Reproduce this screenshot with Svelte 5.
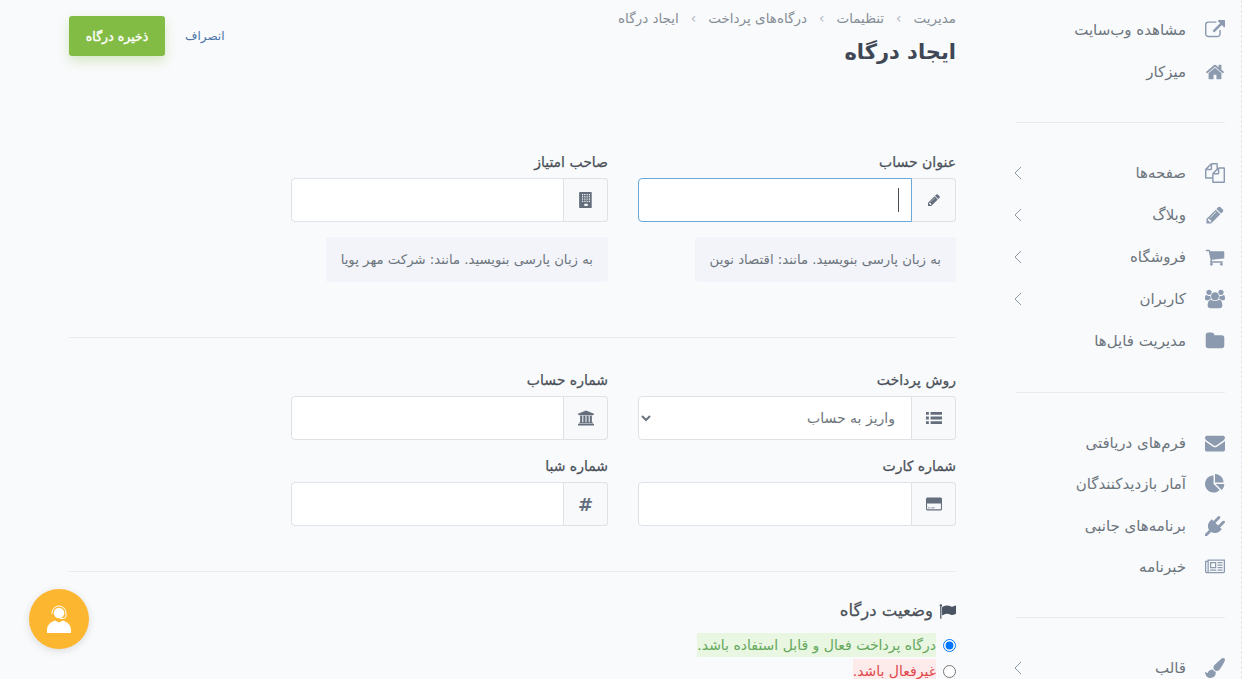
<script>
	const icons = {
		external: { vb: '0 0 1792 1792', d: 'M1408 928v320q0 119-84.5 203.5t-203.5 84.5h-832q-119 0-203.5-84.5t-84.5-203.5v-832q0-119 84.5-203.5t203.5-84.5h704q14 0 23 9t9 23v64q0 14-9 23t-23 9h-704q-66 0-113 47t-47 113v832q0 66 47 113t113 47h832q66 0 113-47t47-113v-320q0-14 9-23t23-9h64q14 0 23 9t9 23zm384-864v512q0 26-19 45t-45 19-45-19l-176-176-652 652q-10 10-23 10t-23-10l-114-114q-10-10-10-23t10-23l652-652-176-176q-19-19-19-45t19-45 45-19h512q26 0 45 19t19 45z' },
		home: { vb: '0 0 1792 1792', d: 'M1472 992v480q0 26-19 45t-45 19h-384v-384h-256v384h-384q-26 0-45-19t-19-45v-480q0-1 .5-3t.5-3l575-474 575 474q1 2 1 6zm223-69l-62 74q-8 9-21 11h-3q-13 0-21-7l-692-577-692 577q-12 8-24 7-13-2-21-11l-62-74q-8-10-7-23.5t11-21.5l719-599q32-26 76-26t76 26l244 204v-195q0-14 9-23t23-9h192q14 0 23 9t9 23v408l219 182q10 8 11 21.5t-7 23.5z' },
		files: { vb: '0 0 1792 1792', d: 'M1696 384q40 0 68 28t28 68v1216q0 40-28 68t-68 28h-960q-40 0-68-28t-28-68v-288h-544q-40 0-68-28t-28-68v-672q0-40 20-88t48-76l408-408q28-28 76-48t88-20h416q40 0 68 28t28 68v328q68-40 128-40h416zm-544 213l-299 299h299v-299zm-640-384l-299 299h299v-299zm196 647l316-316v-416h-384v416q0 40-28 68t-68 28h-416v640h512v-256q0-40 20-88t48-76zm956 804v-1152h-384v416q0 40-28 68t-68 28h-416v640h896z' },
		pencil: { vb: '0 0 1792 1792', d: 'M491 1536l91-91-235-235-91 91v107h128v128h107zm523-928q0-22-22-22-10 0-17 7l-542 542q-7 7-7 17 0 22 22 22 10 0 17-7l542-542q7-7 7-17zm-54-192l416 416-832 832h-416v-416zm683 96q0 53-37 90l-166 166-416-416 166-165q36-38 90-38 53 0 91 38l235 234q37 39 37 91z' },
		cart: { vb: '0 0 1792 1792', d: 'M704 1536q0 52-38 90t-90 38-90-38-38-90 38-90 90-38 90 38 38 90zm896 0q0 52-38 90t-90 38-90-38-38-90 38-90 90-38 90 38 38 90zm128-1088v512q0 24-16.5 42.5t-40.5 21.5l-1044 122q13 60 13 70 0 16-24 64h920q26 0 45 19t19 45-19 45-45 19h-1024q-26 0-45-19t-19-45q0-11 8-31.5t16-36 21.5-40 15.5-29.5l-177-823h-204q-26 0-45-19t-19-45 19-45 45-19h256q16 0 28.5 6.5t19.5 15.5 13 24.5 8 26 5.5 29.5 4.5 26h1201q26 0 45 19t19 45z' },
		users: { vb: '0 0 1920 1792', d: 'M593 896q-162 5-265 128h-134q-82 0-138-40.5t-56-118.5q0-353 124-353 6 0 43.5 21t97.5 42.5 119 21.5q67 0 133-23-5 37-5 66 0 139 81 256zm1071 637q0 120-73 189.5t-194 69.5h-874q-121 0-194-69.5t-73-189.5q0-53 3.5-103.5t14-109 26.5-108.5 43-97.5 62-81 85.5-53.5 111.5-20q10 0 43 21.5t73 48 107 48 135 21.5 135-21.5 107-48 73-48 43-21.5q61 0 111.5 20t85.5 53.5 62 81 43 97.5 26.5 108.5 14 109 3.5 103.5zm-1024-1277q0 106-75 181t-181 75-181-75-75-181 75-181 181-75 181 75 75 181zm704 384q0 159-112.5 271.5t-271.5 112.5-271.5-112.5-112.5-271.5 112.5-271.5 271.5-112.5 271.5 112.5 112.5 271.5zm576 225q0 78-56 118.5t-138 40.5h-134q-103-123-265-128 81-117 81-256 0-29-5-66 66 23 133 23 59 0 119-21.5t97.5-42.5 43.5-21q124 0 124 353zm-128-609q0 106-75 181t-181 75-181-75-75-181 75-181 181-75 181 75 75 181z' },
		folder: { vb: '0 0 1792 1792', d: 'M1728 608v704q0 92-66 158t-158 66h-1216q-92 0-158-66t-66-158v-960q0-92 66-158t158-66h320q92 0 158 66t66 158v32h672q92 0 158 66t66 158z' },
		envelope: { vb: '0 0 1792 1792', d: 'M1792 710v794q0 66-47 113t-113 47h-1472q-66 0-113-47t-47-113v-794q44 49 101 87 362 246 497 345 57 42 92.5 65.5t94.5 48 110 24.5h2q51 0 110-24.5t94.5-48 92.5-65.5q170-123 498-345 57-39 100-87zm0-294q0 79-49 151t-122 123q-376 261-468 325-10 7-42.5 30.5t-54 38-52 32.5-57.5 27-50 9h-2q-23 0-50-9t-57.5-27-52-32.5-54-38-42.5-30.5q-91-64-262-182.5t-205-142.5q-62-42-117-115.5t-55-136.5q0-78 41.5-130t118.5-52h1472q65 0 112.5 47t47.5 113z' },
		pie: { vb: '0 0 1792 1792', d: 'M768 890l546 546q-106 108-247.5 168t-298.5 60q-209 0-385.5-103t-279.5-279.5-103-385.5 103-385.5 279.5-279.5 385.5-103v762zm187 6h773q0 157-60 298.5t-168 247.5zm709-128h-768v-768q209 0 385.5 103t279.5 279.5 103 385.5z' },
		plug: { vb: '0 0 1792 1792', d: 'M1755 453q37 38 37 90.5t-37 90.5l-401 400 150 150-160 160q-163 163-389.5 186.5t-411.5-100.5l-362 362h-181v-181l362-362q-124-185-100.5-411.5t186.5-389.5l160-160 150 150 400-401q38-37 91-37t90 37 37 90.5-37 90.5l-400 401 234 234 401-400q38-37 91-37t90 37z' },
		news: { vb: '0 0 2048 1792', d: 'M1024 512h-384v384h384v-384zm128 640v128h-640v-128h640zm0-768v640h-640v-640h640zm640 768v128h-512v-128h512zm0-256v128h-512v-128h512zm0-256v128h-512v-128h512zm0-256v128h-512v-128h512zm-1536 960v-960h-128v960q0 26 19 45t45 19 45-19 19-45zm1664 0v-1088h-1536v1088q0 33-11 64h1483q26 0 45-19t19-45zm128-1216v1216q0 80-56 136t-136 56h-1664q-80 0-136-56t-56-136v-1088h256v-128h1792z' },
		brush: { vb: '0 0 1792 1792', d: 'M1615 0q70 0 122.5 46.5t52.5 116.5q0 63-45 151-332 629-465 752-97 91-218 91-126 0-216.5-92.5t-90.5-219.5q0-128 92-212l638-579q59-54 130-54zm-909 1034q39 76 106.5 130t150.5 76l1 71q4 213-129.5 347t-348.5 134q-123 0-218-46.5t-152.5-127.5-86.5-183-29-220q7 5 41 30t62 44.5 59 36.5 46 17q41 0 55-37 25-66 57.5-112.5t69.5-76 88-47.5 103-25.5 125-10.5z' },
		building: { vb: '0 0 1792 1792', d: 'M1472 0q26 0 45 19t19 45v1664q0 26-19 45t-45 19h-1280q-26 0-45-19t-19-45v-1664q0-26 19-45t45-19zM448 224v128h128v-128zm256 0v128h128v-128zm256 0v128h128v-128zm256 0v128h128v-128zM448 480v128h128v-128zm256 0v128h128v-128zm256 0v128h128v-128zm256 0v128h128v-128zM448 736v128h128v-128zm256 0v128h128v-128zm256 0v128h128v-128zm256 0v128h128v-128zM448 992v128h128v-128zm256 0v128h128v-128zm256 0v128h128v-128zm256 0v128h128v-128zM704 1312v256h384v-256z', rule: 'evenodd' },
		bank: { vb: '0 0 1920 1792', d: 'M960 0l960 384v128h-128q0 26-20.5 45t-48.5 19h-1526q-28 0-48.5-19t-20.5-45h-128v-128zm-704 640h256v768h128v-768h256v768h128v-768h256v768h128v-768h256v768h59q28 0 48.5 19t20.5 45v64h-1664v-64q0-26 20.5-45t48.5-19h59v-768zm1595 960q28 0 48.5 19t20.5 45v128h-1920v-128q0-26 20.5-45t48.5-19h1782z' },
		card: { vb: '0 0 1920 1792', d: 'M1760 128q66 0 113 47t47 113v1216q0 66-47 113t-113 47h-1600q-66 0-113-47t-47-113v-1216q0-66 47-113t113-47h1600zm-1632 704v672q0 13 9.500 22.500t22.500 9.500h1600q13 0 22.500-9.500t9.500-22.500v-672zm128 576v-96h256v96zm384 0v-96h384v96z', rule: 'evenodd' },
		list: { vb: '0 0 1792 1792', d: 'M0 224h320v320h-320zM512 224h1280v320h-1280zM0 736h320v320h-320zM512 736h1280v320h-1280zM0 1248h320v320h-320zM512 1248h1280v320h-1280z' },
		flag: { vb: '0 0 1792 1792', d: 'M320 256q0 72-64 110v1266q0 13-9.500 22.500t-22.500 9.500h-64q-13 0-22.500-9.500t-9.500-22.500v-1266q-64-38-64-110 0-53 37.500-90.500t90.500-37.500 90.500 37.500 37.500 90.500zm1472 64v763q0 25-12.500 38.500t-39.500 27.500q-215 116-369 116-61 0-123.500-22t-108.500-48-115.500-48-142.500-22q-192 0-464 146-17 9-33 9-26 0-45-19t-19-45v-742q0-32 31-55 21-14 79-43 236-120 421-120 107 0 200 29t219 88q38 19 88 19 54 0 117.500-21t110-47 88-47 54.500-21q26 0 45 19t19 45z' }
	};

	const navGroups = [
		[
			{ label: 'مشاهده وب‌سایت', icon: 'external' },
			{ label: 'میزکار', icon: 'home' }
		],
		[
			{ label: 'صفحه‌ها', icon: 'files', more: true },
			{ label: 'وبلاگ', icon: 'pencil', more: true },
			{ label: 'فروشگاه', icon: 'cart', more: true },
			{ label: 'کاربران', icon: 'users', more: true },
			{ label: 'مدیریت فایل‌ها', icon: 'folder' }
		],
		[
			{ label: 'فرم‌های دریافتی', icon: 'envelope' },
			{ label: 'آمار بازدیدکنندگان', icon: 'pie' },
			{ label: 'برنامه‌های جانبی', icon: 'plug' },
			{ label: 'خبرنامه', icon: 'news' }
		],
		[{ label: 'قالب', icon: 'brush', more: true }]
	];

	const crumbs = ['مدیریت', 'تنظیمات', 'درگاه‌های پرداخت', 'ایجاد درگاه'];
</script>

{#snippet icon(name, cls)}
	<svg class={cls} viewBox={icons[name].vb} aria-hidden="true">
		<path d={icons[name].d} fill-rule={icons[name].rule || 'nonzero'} fill="currentColor" />
	</svg>
{/snippet}

<div class="page" dir="rtl">
	<aside class="sidebar">
		{#each navGroups as group, i}
			{#if i > 0}
				<hr class="nav-sep" />
			{/if}
			<ul class="nav">
				{#each group as item}
					<li class="nav-item">
						<span class="nav-icon">{@render icon(item.icon, 'nav-svg')}</span>
						<span class="nav-label">{item.label}</span>
						{#if item.more}
							<svg class="chev" viewBox="0 0 8 14" aria-hidden="true">
								<path d="M7 1 1 7l6 6" fill="none" stroke="currentColor" stroke-width="1" />
							</svg>
						{/if}
					</li>
				{/each}
			</ul>
		{/each}
	</aside>

	<main class="main">
		<header class="head">
			<div>
				<nav class="crumbs">
					{#each crumbs as c, i}
						{#if i > 0}<span class="crumb-sep">›</span>{/if}
						<span>{c}</span>
					{/each}
				</nav>
				<h1 class="title">ایجاد درگاه</h1>
			</div>
			<div class="actions">
				<a class="cancel" href="#cancel">انصراف</a>
				<button class="save">ذخیره درگاه</button>
			</div>
		</header>

		<section class="form-row first">
			<div class="field">
				<label for="title">عنوان حساب</label>
				<div class="group">
					<span class="addon">{@render icon('pencil', 'addon-svg small')}</span>
					<div class="input-wrap">
						<input id="title" class="focused" type="text" />
						<span class="caret"></span>
					</div>
				</div>
				<p class="help">به زبان پارسی بنویسید. مانند: اقتصاد نوین</p>
			</div>
			<div class="field">
				<label for="owner">صاحب امتیاز</label>
				<div class="group">
					<span class="addon">{@render icon('building', 'addon-svg')}</span>
					<div class="input-wrap"><input id="owner" type="text" /></div>
				</div>
				<p class="help">به زبان پارسی بنویسید. مانند: شرکت مهر پویا</p>
			</div>
		</section>

		<hr class="sep" />

		<section class="form-row second">
			<div class="field">
				<label for="method">روش پرداخت</label>
				<div class="group">
					<span class="addon">{@render icon('list', 'addon-svg')}</span>
					<div class="input-wrap">
						<select id="method"><option>واریز به حساب</option></select>
					</div>
				</div>
			</div>
			<div class="field">
				<label for="account">شماره حساب</label>
				<div class="group">
					<span class="addon">{@render icon('bank', 'addon-svg')}</span>
					<div class="input-wrap"><input id="account" type="text" /></div>
				</div>
			</div>
			<div class="field">
				<label for="card">شماره کارت</label>
				<div class="group">
					<span class="addon">{@render icon('card', 'addon-svg')}</span>
					<div class="input-wrap"><input id="card" type="text" /></div>
				</div>
			</div>
			<div class="field">
				<label for="iban">شماره شبا</label>
				<div class="group">
					<span class="addon hash">#</span>
					<div class="input-wrap"><input id="iban" type="text" /></div>
				</div>
			</div>
		</section>

		<hr class="sep" />

		<section class="status">
			<h2 class="status-title">{@render icon('flag', 'flag')}<span>وضعیت درگاه</span></h2>
			<label class="radio">
				<input type="radio" name="status" checked />
				<span class="ok">درگاه پرداخت فعال و قابل استفاده باشد.</span>
			</label>
			<label class="radio">
				<input type="radio" name="status" />
				<span class="bad">غیرفعال باشد.</span>
			</label>
		</section>
	</main>

	<button class="support" aria-label="پشتیبانی">
		<svg viewBox="0 0 32 32" width="32" height="32" aria-hidden="true">
			<circle cx="16" cy="10" r="5.300" fill="#fff" />
			<path d="M9 11v-1a7 7 0 0 1 14 0v2.500a3 3 0 0 1-3 3h-3" fill="none" stroke="#fff" stroke-width="1" />
			<path d="M4 30v-3c0-5 3.500-8 8-9.500l4 2 4-2c4.500 1.500 8 4.500 8 9.500v3z" fill="#fff" />
		</svg>
	</button>
</div>

<style>
	:global(body) {
		margin: 0;
		background: #f9fafc;
		overflow: hidden;
	}

	.page {
		display: flex;
		height: 679px;
		overflow: hidden;
		background: #f9fafc;
		font-family: 'DejaVu Sans', sans-serif;
		color: #495057;
		position: relative;
	}

	.sidebar {
		width: 246px;
		flex: none;
		box-sizing: border-box;
		border-right: 1px dashed #e2e5ea;
		padding: 9px 16px 0 20px;
	}

	.nav {
		list-style: none;
		margin: 0;
		padding: 0;
	}

	.nav:nth-of-type(2) {
		margin-bottom: 30px;
	}

	.nav:nth-of-type(3) .nav-item {
		height: 41.5px;
	}

	.nav-item {
		display: flex;
		align-items: center;
		height: 42px;
		color: #6c757d;
		font-size: 15px;
	}

	.nav-icon {
		width: 39px;
		flex: none;
		display: flex;
		justify-content: flex-start;
		color: #8b9aae;
	}

	.nav-svg {
		width: 20px;
		height: 20px;
		display: block;
	}

	.nav-label {
		flex: 1;
	}

	.chev {
		width: 8px;
		height: 14px;
		color: #8d98a5;
		margin-left: -2px;
	}

	.nav-sep {
		border: 0;
		border-top: 1px solid #e9ecef;
		margin: 29px 0;
	}

	.nav:nth-of-type(2) + .nav-sep {
		margin-top: 0;
	}

	.main {
		flex: 1;
		min-width: 0;
		padding: 0 40px 0 69px;
	}

	.head {
		display: flex;
		justify-content: space-between;
		align-items: flex-start;
		height: 121px;
	}

	.crumbs {
		display: flex;
		gap: 12px;
		font-size: 13.500px;
		color: #868e96;
		padding-top: 10px;
		line-height: 16px;
	}

	.crumb-sep {
		color: #adb5bd;
	}

	.title {
		margin: 10px 0 0;
		font-size: 21px;
		font-weight: 700;
		line-height: 32px;
		color: #3f4754;
	}

	.actions {
		display: flex;
		align-items: center;
		gap: 20px;
		margin-top: 16px;
	}

	.cancel {
		color: #4a74a8;
		font-size: 12px;
		text-decoration: none;
	}

	.save {
		width: 96px;
		height: 40px;
		border: 0;
		border-radius: 3px;
		background: #83bc45;
		color: #fff;
		font-family: inherit;
		font-size: 12.500px;
		font-weight: 400;
		-webkit-text-stroke: 0.35px #fff;
		box-shadow: 0 5px 12px rgba(131, 188, 69, 0.3);
	}

	.form-row {
		display: grid;
		grid-template-columns: 318px 317px;
		column-gap: 30px;
	}

	.first {
		padding-top: 32px;
	}

	.second {
		row-gap: 17px;
		padding-top: 33px;
	}

	.field label {
		display: block;
		font-size: 14px;
		font-weight: 400;
		-webkit-text-stroke: 0.25px #495057;
		color: #495057;
		line-height: 18px;
		margin-bottom: 7px;
	}

	.group {
		display: flex;
		height: 44px;
	}

	.addon {
		width: 44px;
		flex: none;
		box-sizing: border-box;
		display: flex;
		align-items: center;
		justify-content: center;
		background: #f8f9fa;
		border: 1px solid #dee2e6;
		border-left: 0;
		border-radius: 0 4px 4px 0;
		color: #646e7d;
	}

	.addon-svg {
		width: 16px;
		height: 16px;
	}

	.addon-svg.small {
		width: 14px;
		height: 14px;
	}

	.hash {
		font-size: 18px;
		font-weight: 700;
	}

	.input-wrap {
		flex: 1;
		min-width: 0;
		position: relative;
	}

	.input-wrap input,
	.input-wrap select {
		width: 100%;
		height: 100%;
		box-sizing: border-box;
		background: #fff;
		border: 1px solid #dee2e6;
		border-radius: 4px 0 0 4px;
		padding: 0 12px;
		font-family: inherit;
		font-size: 14px;
		color: #6c757d;
		outline: none;
	}

	.input-wrap input.focused {
		border-color: #6aa8d8;
	}

	.caret {
		position: absolute;
		right: 13px;
		top: 10px;
		width: 1px;
		height: 24px;
		background: #495057;
	}

	.help {
		display: table;
		margin: 15px 0 0;
		padding: 0 15px;
		height: 45px;
		line-height: 45px;
		background: #f3f4f9;
		border-radius: 3px;
		color: #6c757d;
		font-size: 13.250px;
	}

	.sep {
		border: 0;
		border-top: 1px solid #e9ecef;
		margin: 0;
	}

	.first + .sep {
		margin-top: 55px;
	}

	.second + .sep {
		margin-top: 45px;
	}

	.status {
		padding-top: 28px;
	}

	.status-title {
		display: flex;
		align-items: center;
		gap: 6px;
		margin: 0 0 10px;
		font-size: 16.500px;
		font-weight: 400;
		-webkit-text-stroke: 0.25px #495057;
		line-height: 22px;
		color: #495057;
	}

	.flag {
		width: 17px;
		height: 17px;
		color: #4a5463;
	}

	.radio {
		display: flex;
		align-items: center;
		height: 26px;
		font-size: 14px;
	}

	.radio input {
		margin: 0 0 0 7px;
	}

	.ok {
		background: #e8f6e2;
		color: #64a85a;
		line-height: 24px;
	}

	.bad {
		background: #fdeaea;
		color: #e0474c;
		line-height: 24px;
	}

	.support {
		position: absolute;
		left: 29px;
		top: 589px;
		width: 60px;
		height: 60px;
		padding: 0;
		border: 0;
		border-radius: 50%;
		background: #fdb62f;
		box-shadow: 0 2px 8px rgba(0, 0, 0, 0.12);
		display: flex;
		align-items: center;
		justify-content: center;
	}
</style>
